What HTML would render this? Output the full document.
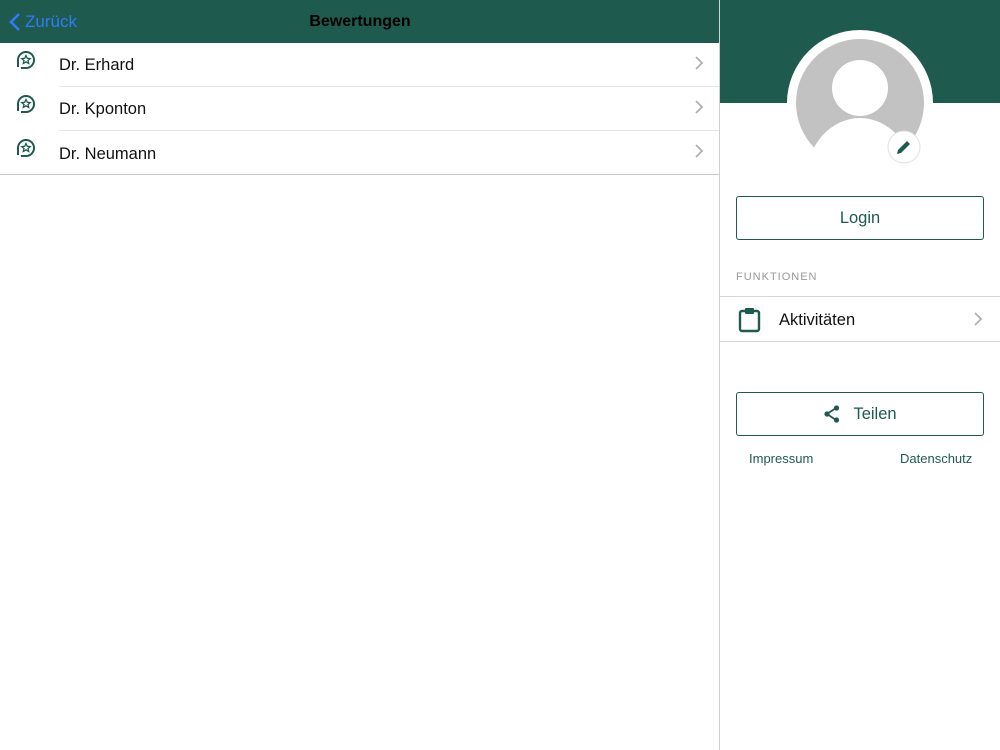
<!DOCTYPE html>
<html><head><meta charset="utf-8"><style>
*{margin:0;padding:0;box-sizing:border-box}
body{width:1000px;height:750px;background:#fff;font-family:"Liberation Sans",Arial,sans-serif;position:relative;overflow:hidden}
.abs{position:absolute}
.hdr{left:0;top:0;width:720px;height:43px;background:#1e5a4e}
.back{left:8px;top:12px;color:#2f7cf6;font-size:17px;display:flex;align-items:center}
.title{left:0;width:720px;top:13px;text-align:center;font-weight:bold;font-size:16px;color:#000}
.row{left:0;width:720px;height:44px}
.row .name{position:absolute;left:59px;top:13px;font-size:16.5px;color:#111}
.row .sep{position:absolute;left:59px;right:0;bottom:0;height:1px;background:#e6e6e6}
.chev{position:absolute;right:16px;top:13px}
.vline{left:719px;top:0;width:1px;height:750px;background:#d0d0d0}
.rgreen{left:720px;top:0;width:280px;height:103px;background:#1e5a4e}
.btn{left:736px;width:248px;height:44px;border:1px solid #1e5a4e;border-radius:3px;color:#1e5a4e;font-size:16.5px;display:flex;align-items:center;justify-content:center}
</style></head><body>
<div class="abs hdr"></div>
<div class="abs back"><svg width="14" height="20" viewBox="0 0 14 20"><path d="M11 2 L3 10 L11 18" stroke="#2f7cf6" stroke-width="2.6" fill="none"/></svg><span style="margin-left:3px">Zurück</span></div>
<div class="abs title">Bewertungen</div>

<div class="abs row" style="top:43px"><svg class="abs" style="left:15px;top:6px" width="22" height="22" viewBox="0 0 22 22"><path d="M3 18 L3 11 A8 8 0 1 1 11 19 L6 19" stroke="#1e5a4e" stroke-width="2" fill="none"/><path d="M11 6.5 L12.3 9.3 L15.2 9.6 L13 11.5 L13.7 14.4 L11 12.9 L8.3 14.4 L9 11.5 L6.8 9.6 L9.7 9.3Z" stroke="#1e5a4e" stroke-width="1.3" fill="none"/></svg><div class="name">Dr. Erhard</div><svg class="chev" width="9" height="14"><path d="M1 1 L7 7 L1 13" stroke="#b0b0b0" stroke-width="1.8" fill="none"/></svg><div class="sep"></div></div>
<div class="abs row" style="top:87px"><svg class="abs" style="left:15px;top:6px" width="22" height="22" viewBox="0 0 22 22"><path d="M3 18 L3 11 A8 8 0 1 1 11 19 L6 19" stroke="#1e5a4e" stroke-width="2" fill="none"/><path d="M11 6.5 L12.3 9.3 L15.2 9.6 L13 11.5 L13.7 14.4 L11 12.9 L8.3 14.4 L9 11.5 L6.8 9.6 L9.7 9.3Z" stroke="#1e5a4e" stroke-width="1.3" fill="none"/></svg><div class="name">Dr. Kponton</div><svg class="chev" width="9" height="14"><path d="M1 1 L7 7 L1 13" stroke="#b0b0b0" stroke-width="1.8" fill="none"/></svg><div class="sep"></div></div>
<div class="abs row" style="top:131px"><svg class="abs" style="left:15px;top:6px" width="22" height="22" viewBox="0 0 22 22"><path d="M3 18 L3 11 A8 8 0 1 1 11 19 L6 19" stroke="#1e5a4e" stroke-width="2" fill="none"/><path d="M11 6.5 L12.3 9.3 L15.2 9.6 L13 11.5 L13.7 14.4 L11 12.9 L8.3 14.4 L9 11.5 L6.8 9.6 L9.7 9.3Z" stroke="#1e5a4e" stroke-width="1.3" fill="none"/></svg><div class="name" style="top:14px">Dr. Neumann</div><svg class="chev" width="9" height="14"><path d="M1 1 L7 7 L1 13" stroke="#b0b0b0" stroke-width="1.8" fill="none"/></svg><div class="sep" style="left:0;background:#c8c8c8"></div></div>

<div class="abs vline"></div>
<div class="abs rgreen"></div>
<svg class="abs" style="left:720px;top:0" width="280" height="180">
<circle cx="140" cy="103" r="73" fill="#fff"/>
<clipPath id="c"><rect x="0" y="0" width="280" height="151"/></clipPath>
<g clip-path="url(#c)">
<circle cx="140" cy="103" r="64" fill="#c2c2c2"/>
<circle cx="140" cy="88" r="28" fill="#fff"/>
<ellipse cx="140" cy="180" rx="54" ry="62" fill="#fff"/>
</g>
<circle cx="184" cy="147" r="16" fill="#fff" stroke="#e0e0e0" stroke-width="1"/>
<path d="M177 154 L178 150 L187 141 L190 144 L181 153Z" fill="#1e5a4e"/>
</svg>

<div class="abs btn" style="top:196px">Login</div>
<div class="abs" style="left:736px;top:271px;font-size:11px;color:#999;letter-spacing:1px">FUNKTIONEN</div>
<div class="abs" style="left:720px;top:296px;width:280px;height:1px;background:#d6d6d6"></div>
<div class="abs" style="left:720px;top:341px;width:280px;height:1px;background:#d6d6d6"></div>
<svg class="abs" style="left:738px;top:307px" width="24" height="26" viewBox="0 0 24 26"><rect x="2" y="4" width="19" height="20" rx="2" stroke="#1e5a4e" stroke-width="2.4" fill="none"/><rect x="7" y="1" width="9" height="6" rx="1" fill="#1e5a4e"/></svg>
<div class="abs" style="left:779px;top:311px;font-size:16.5px;color:#111">Aktivitäten</div>
<svg class="abs" style="left:974px;top:312px" width="9" height="14"><path d="M1 1 L7 7 L1 13" stroke="#b0b0b0" stroke-width="1.8" fill="none"/></svg>

<div class="abs btn" style="top:392px"><svg width="18" height="18" viewBox="0 0 18 18" style="margin-right:12px"><path d="M13 3 L4 9 L13 15" stroke="#1e5a4e" stroke-width="1.8" fill="none"/><circle cx="13.5" cy="3" r="2.6" fill="#1e5a4e"/><circle cx="4" cy="9" r="2.6" fill="#1e5a4e"/><circle cx="13.5" cy="15" r="2.6" fill="#1e5a4e"/></svg>Teilen</div>
<div class="abs" style="left:749px;top:451px;font-size:13px;color:#1e5a4e">Impressum</div>
<div class="abs" style="left:900px;top:451px;font-size:13px;color:#1e5a4e">Datenschutz</div>
</body></html>
